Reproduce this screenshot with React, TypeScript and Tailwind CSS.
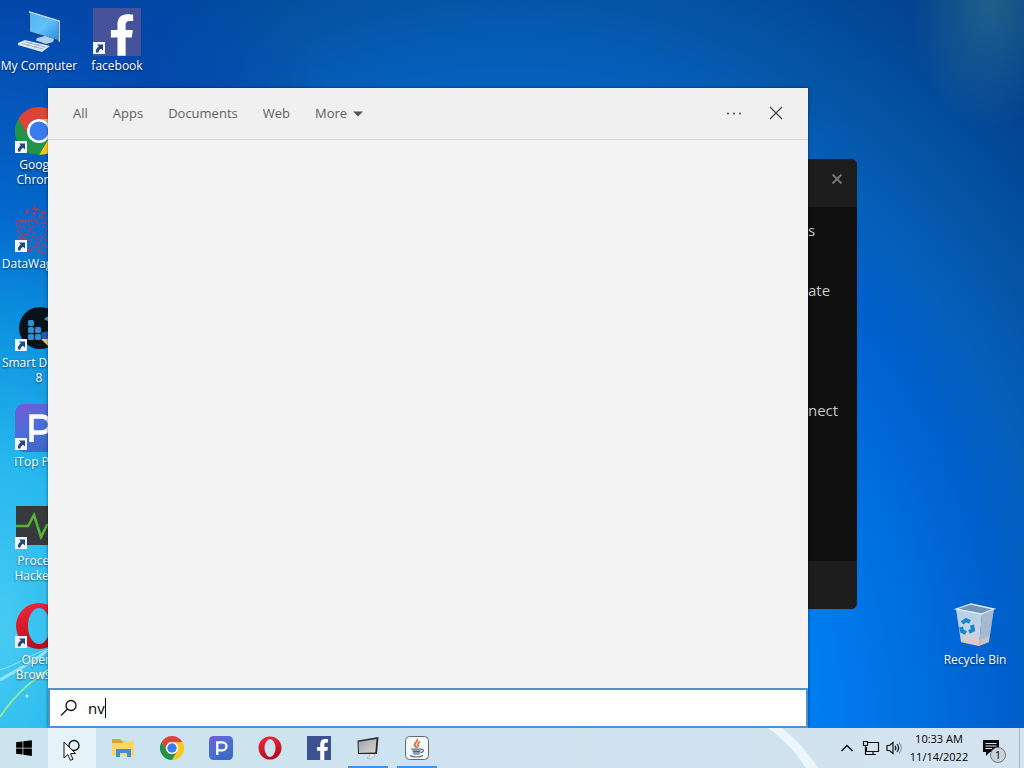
import React from 'react';
import { FaFacebookF, FaWindows } from 'react-icons/fa';

interface IconProps {
    className?: string;
}

const ChromeIcon: React.FC<IconProps> = ({ className }) => (
    <svg viewBox="0 0 48 48" className={className}>
        <path d="M3.2 12A24 24 0 0 1 44.8 12L24 12A12 12 0 0 0 13.6 30Z" fill="#dd4437" />
        <path d="M44.8 12A24 24 0 0 1 24 48L34.4 30A12 12 0 0 0 24 12Z" fill="#fbc81a" />
        <path d="M24 48A24 24 0 0 1 3.2 12L13.6 30A12 12 0 0 0 34.4 30Z" fill="#239447" />
        <circle cx="24" cy="24" r="12" fill="#fff" />
        <circle cx="24" cy="24" r="9.5" fill="#3a7cec" />
    </svg>
);

const OperaIcon: React.FC<IconProps> = ({ className }) => (
    <svg viewBox="0 0 48 48" className={className}>
        <defs>
            <linearGradient id="opera" x1="0" y1="0" x2="0.4" y2="1">
                <stop offset="0" stopColor="#f5283c" />
                <stop offset="1" stopColor="#b80d1e" />
            </linearGradient>
        </defs>
        <path fillRule="evenodd" fill="url(#opera)" d="M24 1a23 23 0 1 0 0 46a23 23 0 1 0 0-46ZM24 6a11 18 0 1 1 0 36a11 18 0 1 1 0-36Z" />
    </svg>
);

const PdfIcon: React.FC<IconProps> = ({ className }) => (
    <svg viewBox="0 0 48 48" className={className}>
        <defs>
            <linearGradient id="pdf" x1="0" y1="0" x2="0.6" y2="1">
                <stop offset="0" stopColor="#7658dc" />
                <stop offset="0.5" stopColor="#4e6ed6" />
                <stop offset="1" stopColor="#3c68c4" />
            </linearGradient>
        </defs>
        <rect width="48" height="48" rx="9" fill="url(#pdf)" />
        <path d="M16.5 38V12.5H27a8 8 0 0 1 0 16H17" fill="none" stroke="#fff" strokeWidth="4.5" />
    </svg>
);

const ComputerIcon = () => (
    <svg viewBox="0 0 48 48" className="size-12">
        <defs>
            <linearGradient id="screen" x1="0" y1="0" x2="1" y2="1">
                <stop offset="0" stopColor="#4fb4f2" />
                <stop offset="0.5" stopColor="#63c0f8" />
                <stop offset="1" stopColor="#2a8fe2" />
            </linearGradient>
        </defs>
        <path d="M14 3L45 12.5L44 34L14 24Z" fill="#1d3f77" />
        <path d="M14 3L45 12.5V33.5L43.5 34V14L14 5Z" fill="#b9d3ea" />
        <path d="M15 5L43 13.5V32L15 23.5Z" fill="url(#screen)" />
        <path d="M22 30L30 28L39 31L38 34L31 36L21 32.5Z" fill="#b7cfe6" />
        <path d="M3 35L10 32L35 38L27 44L3 37Z" fill="#dfe8f2" />
        <path d="M7 35.5L28 41M10 33.8L31 39.4M12 38L17 34M19 40L24 36" stroke="#8ea3bb" strokeWidth="0.8" />
    </svg>
);

const rings = [
    { r: 6, n: 10 },
    { r: 10, n: 14 },
    { r: 14, n: 18 },
    { r: 18, n: 22 },
    { r: 21, n: 18 },
];

const DataWagonIcon = () => (
    <svg viewBox="0 0 48 48" className="size-12">
        {rings.map(({ r, n }, ring) =>
            Array.from({ length: n }, (_, i) => {
                const a = (i / n) * Math.PI * 2 + ring * 0.4;
                const d = r + Math.sin(i * 2.7) * 1.8;
                const b = a + (i % 3 ? 0.18 : -0.15);
                return (
                    <line
                        key={`${ring}-${i}`}
                        x1={24 + Math.cos(a) * d}
                        y1={24 + Math.sin(a) * d}
                        x2={24 + Math.cos(b) * (d + 2.6)}
                        y2={24 + Math.sin(b) * (d + 2.6)}
                        stroke="#b53b5f"
                        strokeWidth="1.7"
                        opacity="0.9"
                    />
                );
            })
        )}
    </svg>
);

const DefragIcon = () => (
    <svg viewBox="0 0 48 48" className="size-12">
        <circle cx="25" cy="23" r="21" fill="#06131c" />
        <g fill="#2792d4">
            <rect x="13" y="15" width="6" height="6" rx="1.5" />
            <rect x="13" y="22" width="6" height="6" rx="1.5" />
            <rect x="13" y="29" width="6" height="6" rx="1.5" />
            <rect x="20" y="22" width="6" height="6" rx="1.5" />
            <rect x="20" y="29" width="6" height="6" rx="1.5" />
        </g>
        <path d="M29 14L36 9V18Z" fill="#4ba6c4" />
        <path d="M26 28L40 24V34H27Z" fill="#1f5fae" />
        <path d="M26 34H40V42L33 41Z" fill="#f2c27c" />
    </svg>
);

const ProcessHackerIcon = () => (
    <svg viewBox="0 0 48 48" className="size-12">
        <rect x="1" y="3" width="47" height="39" fill="#373a3c" />
        <path d="M1 23H13L19 12L26 34L32 22H47" fill="none" stroke="#57b33a" strokeWidth="2.5" />
    </svg>
);

const RecycleBinIcon = () => (
    <svg viewBox="0 0 48 48" className="size-12">
        <defs>
            <linearGradient id="bin" x1="0" y1="0" x2="0" y2="1">
                <stop offset="0" stopColor="#b4cfe8" />
                <stop offset="0.6" stopColor="#c6d3e2" />
                <stop offset="1" stopColor="#d9cdcb" />
            </linearGradient>
        </defs>
        <path d="M5 7L31 12L28 44L10 40Z" fill="url(#bin)" />
        <path d="M31 12L43 7L38 40L28 44Z" fill="#a6b9d0" />
        <path d="M5 7L20 2L43 7L30 12Z" fill="#7394b5" stroke="#dcebf7" strokeWidth="1.3" />
        <path d="M10 36L28 38L38 34V40L28 44L10 40Z" fill="#e3c6ba" opacity="0.6" />
        <g fill="none" stroke="#1687cf" strokeWidth="4">
            <path d="M11 21L15 18L19 20" />
            <path d="M21 23L22 28L18 30" />
            <path d="M15 31L11 29L10 25" />
        </g>
    </svg>
);

const FacebookTile = () => (
    <div className="flex size-12 items-end justify-end bg-[#46539b] pr-1.5">
        <FaFacebookF className="h-[42px] w-[26px] text-white" />
    </div>
);

const Shortcut = () => (
    <svg viewBox="0 0 12 12" className="absolute bottom-0.5 left-0 size-3">
        <rect width="12" height="12" fill="#f2f6fc" />
        <path d="M4 2.5H10V8.5L8 6.8C6.500 7.5 5.5 9 5.5 10.5H3C2.5 8 3.5 6 5.8 4.5Z" fill="#27467e" />
    </svg>
);

interface DesktopItem {
    label: string;
    icon: React.ReactNode;
    shortcut?: boolean;
}

const firstColumn: DesktopItem[] = [
    { label: 'My Computer', icon: <ComputerIcon /> },
    { label: 'Google Chrome', icon: <ChromeIcon className="size-12" />, shortcut: true },
    { label: 'DataWagon…', icon: <DataWagonIcon />, shortcut: true },
    { label: 'Smart Defrag 8', icon: <DefragIcon />, shortcut: true },
    { label: 'iTop PDF', icon: <PdfIcon className="size-12" />, shortcut: true },
    { label: 'Process Hacker 2', icon: <ProcessHackerIcon />, shortcut: true },
    { label: 'Opera Browser', icon: <OperaIcon className="size-12" />, shortcut: true },
];

const DesktopIcon: React.FC<{ item: DesktopItem }> = ({ item }) => (
    <button className="flex h-[99px] w-[78px] flex-col items-center pt-2">
        <span className="relative block size-12">
            {item.icon}
            {item.shortcut && <Shortcut />}
        </span>
        <span className="mt-0.5 text-xs leading-[15px] text-white [text-shadow:0_1px_2px_rgb(0_0_0/0.6)]">{item.label}</span>
    </button>
);

const Wallpaper = () => (
    <svg viewBox="0 0 1024 728" preserveAspectRatio="none" className="absolute inset-0 size-full">
        <defs>
            <radialGradient id="beam" cx="0.5" cy="0.5" r="0.5">
                <stop offset="0" stopColor="#4f8f90" stopOpacity="0.4" />
                <stop offset="1" stopColor="#4f8f90" stopOpacity="0" />
            </radialGradient>
        </defs>
        <ellipse cx="990" cy="0" rx="80" ry="130" fill="url(#beam)" />
        <path d="M0 680C20 668 36 662 60 640" fill="none" stroke="#bff0fa" strokeWidth="3" opacity="0.7" />
        <path d="M0 670C20 664 36 650 60 646" fill="none" stroke="#d8f8fc" strokeWidth="1" opacity="0.6" />
        <path d="M0 717C14 696 28 682 60 662" fill="none" stroke="#9df08c" strokeWidth="2" opacity="0.9" />
        <circle cx="27" cy="696" r="1.5" fill="#c8f4ff" />
    </svg>
);

const VpnWindow = () => (
    <div className="absolute left-[768px] top-[159px] flex h-[450px] w-[89px] flex-col overflow-hidden rounded-md bg-[#101010] text-[15px] leading-5 text-[#c8c8c8]">
        <div className="flex h-12 items-start justify-end bg-[#1d1d1d] px-3.5 pt-3.5">
            <button aria-label="Close window">
                <svg viewBox="0 0 12 12" className="size-3">
                    <path d="M1.500 1.5L10.5 10.5M10.5 1.5L1.5 10.5" stroke="#757575" strokeWidth="2" />
                </svg>
            </button>
        </div>
        <div className="flex-1 pl-10 pt-[13px]">
            <p>s</p>
            <p className="mt-10">ate</p>
            <p className="mt-[100px]">nect</p>
        </div>
        <div className="h-12 bg-[#1d1d1d]" />
    </div>
);

const SearchIcon: React.FC<IconProps> = ({ className }) => (
    <svg viewBox="0 0 18 18" className={className} fill="none" stroke="#111" strokeWidth="1.3">
        <circle cx="11" cy="6.5" r="5" />
        <path d="M7.5 10L1 16.5" />
    </svg>
);

const SearchPanel = () => (
    <div className="absolute bottom-0 left-12 top-[88px] flex w-[760px] flex-col bg-[#f4f4f4] shadow-[0_0_3px_rgba(0,0,0,0.5)]">
        <div className="flex h-[52px] items-center justify-between border-b border-[#d6d6d6] bg-[#f0f0f0] pl-[25px] pr-6 text-[13px] text-[#5f5f5f]">
            <nav className="flex gap-[25px]">
                <button>All</button>
                <button>Apps</button>
                <button>Documents</button>
                <button>Web</button>
                <button className="flex items-center gap-1.5">
                    More
                    <svg viewBox="0 0 10 6" className="h-1.5 w-2.5">
                        <path d="M0 0.5H10L5 5.5Z" fill="#555" />
                    </svg>
                </button>
            </nav>
            <div className="flex items-center gap-[26px]">
                <button aria-label="Options">
                    <svg viewBox="0 0 16 16" className="size-4" fill="#555">
                        <circle cx="2" cy="7.5" r="1.1" />
                        <circle cx="8" cy="7.5" r="1.1" />
                        <circle cx="14" cy="7.5" r="1.1" />
                    </svg>
                </button>
                <button aria-label="Close">
                    <svg viewBox="0 0 16 16" className="size-4">
                        <path d="M2 1L14 13M14 1L2 13" stroke="#444" strokeWidth="1.2" />
                    </svg>
                </button>
            </div>
        </div>
        <div className="flex-1" />
        <label className="flex h-10 items-center border-2 border-[#4f91cf] bg-white pl-2.5">
            <SearchIcon className="size-[18px]" />
            <input
                aria-label="Search"
                defaultValue="nv"
                className="ml-2.5 text-[15px] leading-5 text-black caret-transparent outline-none field-sizing-content"
            />
            <span className="h-5 w-px bg-black" />
        </label>
    </div>
);

const ExplorerIcon = () => (
    <svg viewBox="0 0 24 24" className="size-6">
        <path d="M1 3H9L11 5H20V9H1Z" fill="#d9a32c" />
        <path d="M1 7H11L13 5H23V20H1Z" fill="#fbd667" />
        <path d="M5 21V13H20V21H16V17H9V21Z" fill="#3f8fd0" />
    </svg>
);

const MonitorIcon = () => (
    <svg viewBox="0 0 24 24" className="size-6">
        <defs>
            <linearGradient id="monitor" x1="0" y1="0" x2="1" y2="1">
                <stop offset="0" stopColor="#9fa2a4" />
                <stop offset="1" stopColor="#d4d5d6" />
            </linearGradient>
        </defs>
        <path d="M13 18L17 17L19 20L14 23L11 22L14 20Z" fill="#e4e6e8" stroke="#9ba0a3" strokeWidth="0.5" />
        <path d="M1.500 4.5L22.5 1L21 18L2 18Z" fill="#26292c" />
        <path d="M2.500 5.8L20.5 3L19.3 16.5L3 17Z" fill="url(#monitor)" />
    </svg>
);

const JavaIcon = () => (
    <svg viewBox="0 0 24 24" className="size-6" fill="none">
        <rect x="0.5" y="0.5" width="23" height="23" rx="4" fill="#f4f7f9" stroke="#5e6b75" />
        <path d="M12 3C13.500 6 8 7 10 10C10.500 11 12 11 11.500 12M15 5.500C12 7.5 12.500 9 13.500 11" stroke="#e2702c" strokeWidth="1.8" />
        <path d="M7 13.5H16L15 17.5H8Z" fill="#8da0b0" />
        <path d="M6 13H16M16 13.500C19.500 12.5 19 16.5 15.5 16.5M8 15.500H15M8.500 18H14.500M5 19.500C8 21.5 15 21.5 18 19.5" stroke="#4e6b84" strokeWidth="1.1" />
    </svg>
);

interface TaskItem {
    name: string;
    icon: React.ReactNode;
    running?: boolean;
}

const tasks: TaskItem[] = [
    { name: 'File Explorer', icon: <ExplorerIcon /> },
    { name: 'Chrome', icon: <ChromeIcon className="size-6" /> },
    { name: 'iTop PDF', icon: <PdfIcon className="size-6" /> },
    { name: 'Opera', icon: <OperaIcon className="size-6" /> },
    {
        name: 'Facebook',
        icon: (
            <span className="flex size-6 items-end justify-end bg-[#3b5190] pr-0.5">
                <FaFacebookF className="h-[21px] w-[13px] text-white" />
            </span>
        ),
    },
    { name: 'Remote desktop', icon: <MonitorIcon />, running: true },
    { name: 'Java', icon: <JavaIcon />, running: true },
];

const Taskbar = () => (
    <div className="relative flex h-10 shrink-0 bg-linear-to-r from-[#cbe4ee] via-[#cee3ef] to-[#d5e3f0]">
        <svg viewBox="0 0 50 40" className="absolute bottom-0 left-[768px] h-10 w-[50px]">
            <path d="M0 0H14C28 12 40 24 50 40H38C28 24 14 10 0 0Z" fill="#f4fafd" opacity="0.8" />
        </svg>
        <button aria-label="Start" className="flex w-12 items-center justify-center">
            <FaWindows className="size-[18px] text-black" />
        </button>
        <button aria-label="Search" className="relative flex w-12 items-center justify-center bg-[#e6f3f8]">
            <SearchIcon className="size-[18px]" />
            <svg viewBox="0 0 14 20" className="absolute left-[15px] top-[13px] h-5 w-3.5">
                <path d="M1 1V17L4.8 13.5L7.5 19.3L10 18.2L7.4 12.6H12.5Z" fill="#fff" stroke="#111" />
            </svg>
        </button>
        <div className="ml-0.5 flex flex-1">
            {tasks.map(task => (
                <button key={task.name} aria-label={task.name} className="relative flex w-[49px] items-center justify-center">
                    {task.icon}
                    {task.running && <span className="absolute bottom-0 h-0.5 w-10 bg-[#3f93ee]" />}
                </button>
            ))}
        </div>
        <div className="flex items-center text-black">
            <button aria-label="Show hidden icons" className="mr-2">
                <svg viewBox="0 0 14 14" className="size-3.5">
                    <path d="M1.500 10L7 4.5L12.5 10" fill="none" stroke="#111" strokeWidth="1.4" />
                </svg>
            </button>
            <button aria-label="Network" className="mr-1.5">
                <svg viewBox="0 0 18 16" className="h-4 w-[18px]" fill="none" stroke="#111" strokeWidth="1.2">
                    <path d="M6 2.5H16.5V11.5H4.5V7M11 11.5V14.5M6 14.5H14" />
                    <path d="M1.5 1.5H5.5V5.5H1.5ZM3.5 5.5V14.5H6" />
                </svg>
            </button>
            <button aria-label="Volume" className="mr-[7px]">
                <svg viewBox="0 0 16 16" className="size-4" fill="none" stroke="#111" strokeWidth="1.2">
                    <path d="M1 5.5H3.5L7 2.5V13.5L3.5 10.5H1Z" />
                    <path d="M9 5.8C10 7 10 9 9 10.2M11 4C13 6.5 13 9.5 11 12" />
                    <path d="M13 2.5C16 6 16 10 13 13.5" stroke="#8d9aa3" />
                </svg>
            </button>
            <div className="w-[60px] whitespace-nowrap text-center text-[11px] leading-[18px]">
                <p>10:33 AM</p>
                <p>11/14/2022</p>
            </div>
            <button aria-label="Notifications" className="relative ml-[13px] mr-[19px] size-[18px]">
                <svg viewBox="0 0 18 18" className="size-[18px]">
                    <path d="M1 1H17V13H8L4 17V13H1Z" fill="#0b0b0b" />
                    <path d="M3.500 4.5H14.5M3.500 7H14.5M3.500 9.5H10" stroke="#d3e3ee" />
                </svg>
                <span className="absolute left-2 top-2 flex size-4 items-center justify-center rounded-full border border-[#6f777c] bg-[#c9d3da] text-[11px]">1</span>
            </button>
            <button aria-label="Show desktop" className="h-10 w-[5px] border-l border-[#a9b8c2]" />
        </div>
    </div>
);

export default function App() {
    return (
        <div className="flex h-screen flex-col overflow-hidden font-['Open_Sans','Noto_Sans',sans-serif]">
            <main className="relative flex min-h-0 flex-1 justify-between bg-[radial-gradient(360px_700px_at_0_87%,#48cbf2_0%,#27b8ee_24%,#0a8ede_46%,#0468cc_60%,#0458bc_74%,#0448ad_89%,transparent_120%),radial-gradient(680px_800px_at_50%_100%,#0080f4_42%,#0070e2_58%,#0060cc_73%,#0560bc_82%,#0556a8_91%,#024390_108%,#023c80_120%)]">
                <Wallpaper />
                <div className="relative flex items-start">
                    <div className="flex flex-col">
                        {firstColumn.map(item => (
                            <DesktopIcon key={item.label} item={item} />
                        ))}
                    </div>
                    <DesktopIcon item={{ label: 'facebook', icon: <FacebookTile />, shortcut: true }} />
                </div>
                <div className="relative mb-[35px] mr-2.5 flex items-end">
                    <DesktopIcon item={{ label: 'Recycle Bin', icon: <RecycleBinIcon /> }} />
                </div>
                <VpnWindow />
                <SearchPanel />
            </main>
            <Taskbar />
        </div>
    );
}
